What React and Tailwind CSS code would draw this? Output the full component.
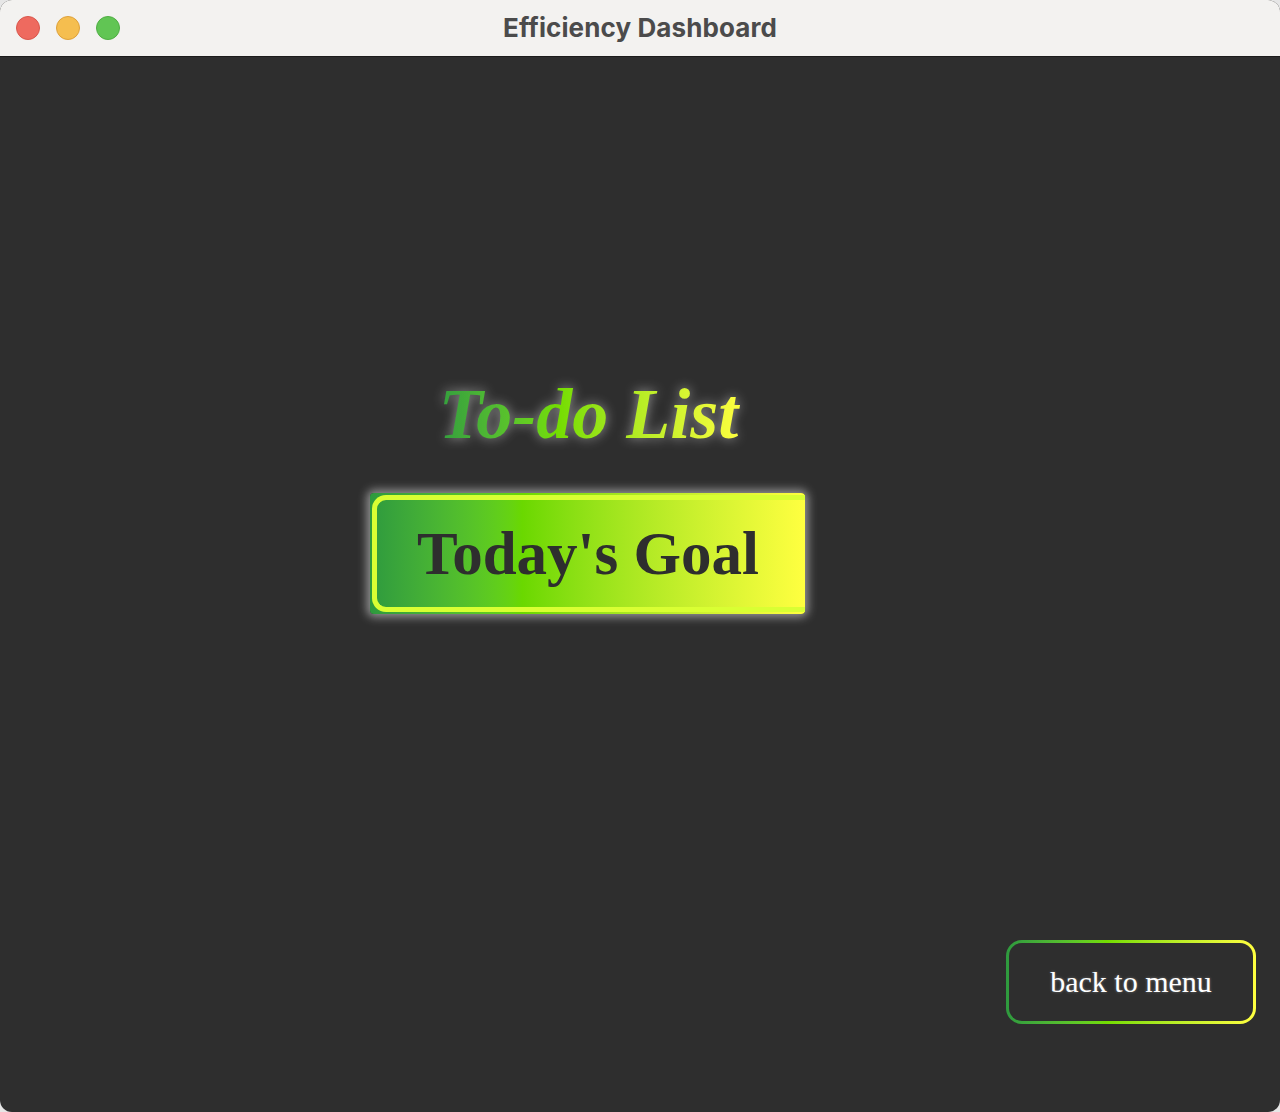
export default function App() {
  return (
    <div className="w-[1280px] h-[1112px] bg-[#e6e6e6]">
      <div className="w-full h-full rounded-[12px] overflow-hidden flex flex-col bg-[#2e2e2e]">
        <div className="h-[56px] shrink-0 bg-[#f3f2f0] border-b border-[#1c1c1c] flex items-center relative box-content">
          <div className="flex items-center gap-[16px] pl-[16px]">
            <span className="w-[24px] h-[24px] rounded-full bg-[#ee6a5f] border border-[#d9574c]" />
            <span className="w-[24px] h-[24px] rounded-full bg-[#f5be4f] border border-[#dea13a]" />
            <span className="w-[24px] h-[24px] rounded-full bg-[#61c554] border border-[#4fae43]" />
          </div>
          <div className="absolute inset-0 pb-[2px] flex items-center justify-center text-[26px] font-bold text-[#4b4b4b] tracking-[0.1px] [font-family:Inter,'Liberation_Sans',sans-serif]">
            Efficiency Dashboard
          </div>
        </div>
        <div className="flex-1 flex flex-col [font-family:'Liberation_Serif','Times_New_Roman',serif]">
          <div className="ml-[370px] mt-[321px] w-[435px] flex flex-col items-center">
            <div className="text-[72px] leading-none font-bold italic pl-[8px] pr-[6px] bg-linear-to-r from-[#2e9a3e] via-[#72dc00] via-40% to-[#ffff40] bg-clip-text text-transparent drop-shadow-[0_0_6px_rgba(255,255,255,0.5)]">
              To-do List
            </div>
            <div className="mt-[43px] w-[435px] h-[121px] rounded-[4px] bg-linear-to-r from-[#2e9a3e] via-[#6ad800] via-35% to-[#ffff40] shadow-[0_0_10px_3px_rgba(255,255,255,0.5)] p-[2px] pr-0">
              <div className="w-full h-full rounded-l-[14px] border-[5px] border-r-0 border-[#d9ff33] flex items-center justify-center">
                <span className="text-[61px] leading-none font-bold text-[#2e2e2e] mr-[6px]">Today's Goal</span>
              </div>
            </div>
          </div>
          <div className="flex-1" />
          <div className="flex justify-end pr-[24px] pb-[88px]">
            <div className="w-[250px] h-[84px] rounded-[16px] p-[3px] bg-linear-to-r from-[#2e9a3e] via-[#72dc00] via-40% to-[#ffff40]">
              <div className="w-full h-full rounded-[13px] bg-[#2e2e2e] flex items-center justify-center">
                <span className="text-[30px] leading-none text-white [text-shadow:0_0_3px_rgba(255,255,255,0.35)]">back to menu</span>
              </div>
            </div>
          </div>
        </div>
      </div>
    </div>
  );
}
